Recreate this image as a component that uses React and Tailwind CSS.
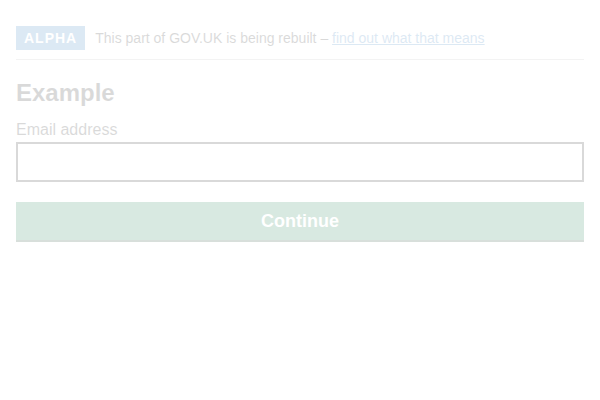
export default function App() {
  return (
    <div className="w-[600px] h-[400px] bg-white pt-[10px]">
      <div className="opacity-[0.15] px-4 text-[#0b0c0c] font-['Liberation_Sans',Arial,sans-serif]">
        <div className="pt-[10px] pb-[9px] border-b border-[#b1b4b6] flex items-center">
          <div className="mt-[6px] bg-[#1d70b8] text-white font-bold text-[14px] leading-[15px] tracking-[1px] uppercase px-[8px] pt-[5px] pb-[4px] mr-[10px]">
            Alpha
          </div>
          <span className="mt-[6px] text-[14px] leading-[20px]">
            This part of GOV.UK is being rebuilt –{" "}
            <a href="#" className="text-[#1d70b8] underline">find out what that means</a>
          </span>
        </div>
        <h1 className="mt-[19px] text-[24px] leading-[28px] font-bold">Example</h1>
        <label className="block mt-[13px] text-[16px] leading-[20px]">Email address</label>
        <div className="mt-[2px] h-[40px] border-2 border-[#0b0c0c]"></div>
        <button className="mt-[20px] w-full h-[38px] bg-[#00703c] text-white text-[18px] font-bold shadow-[0_2px_0_#002d18]">
          Continue
        </button>
      </div>
    </div>
  );
}
